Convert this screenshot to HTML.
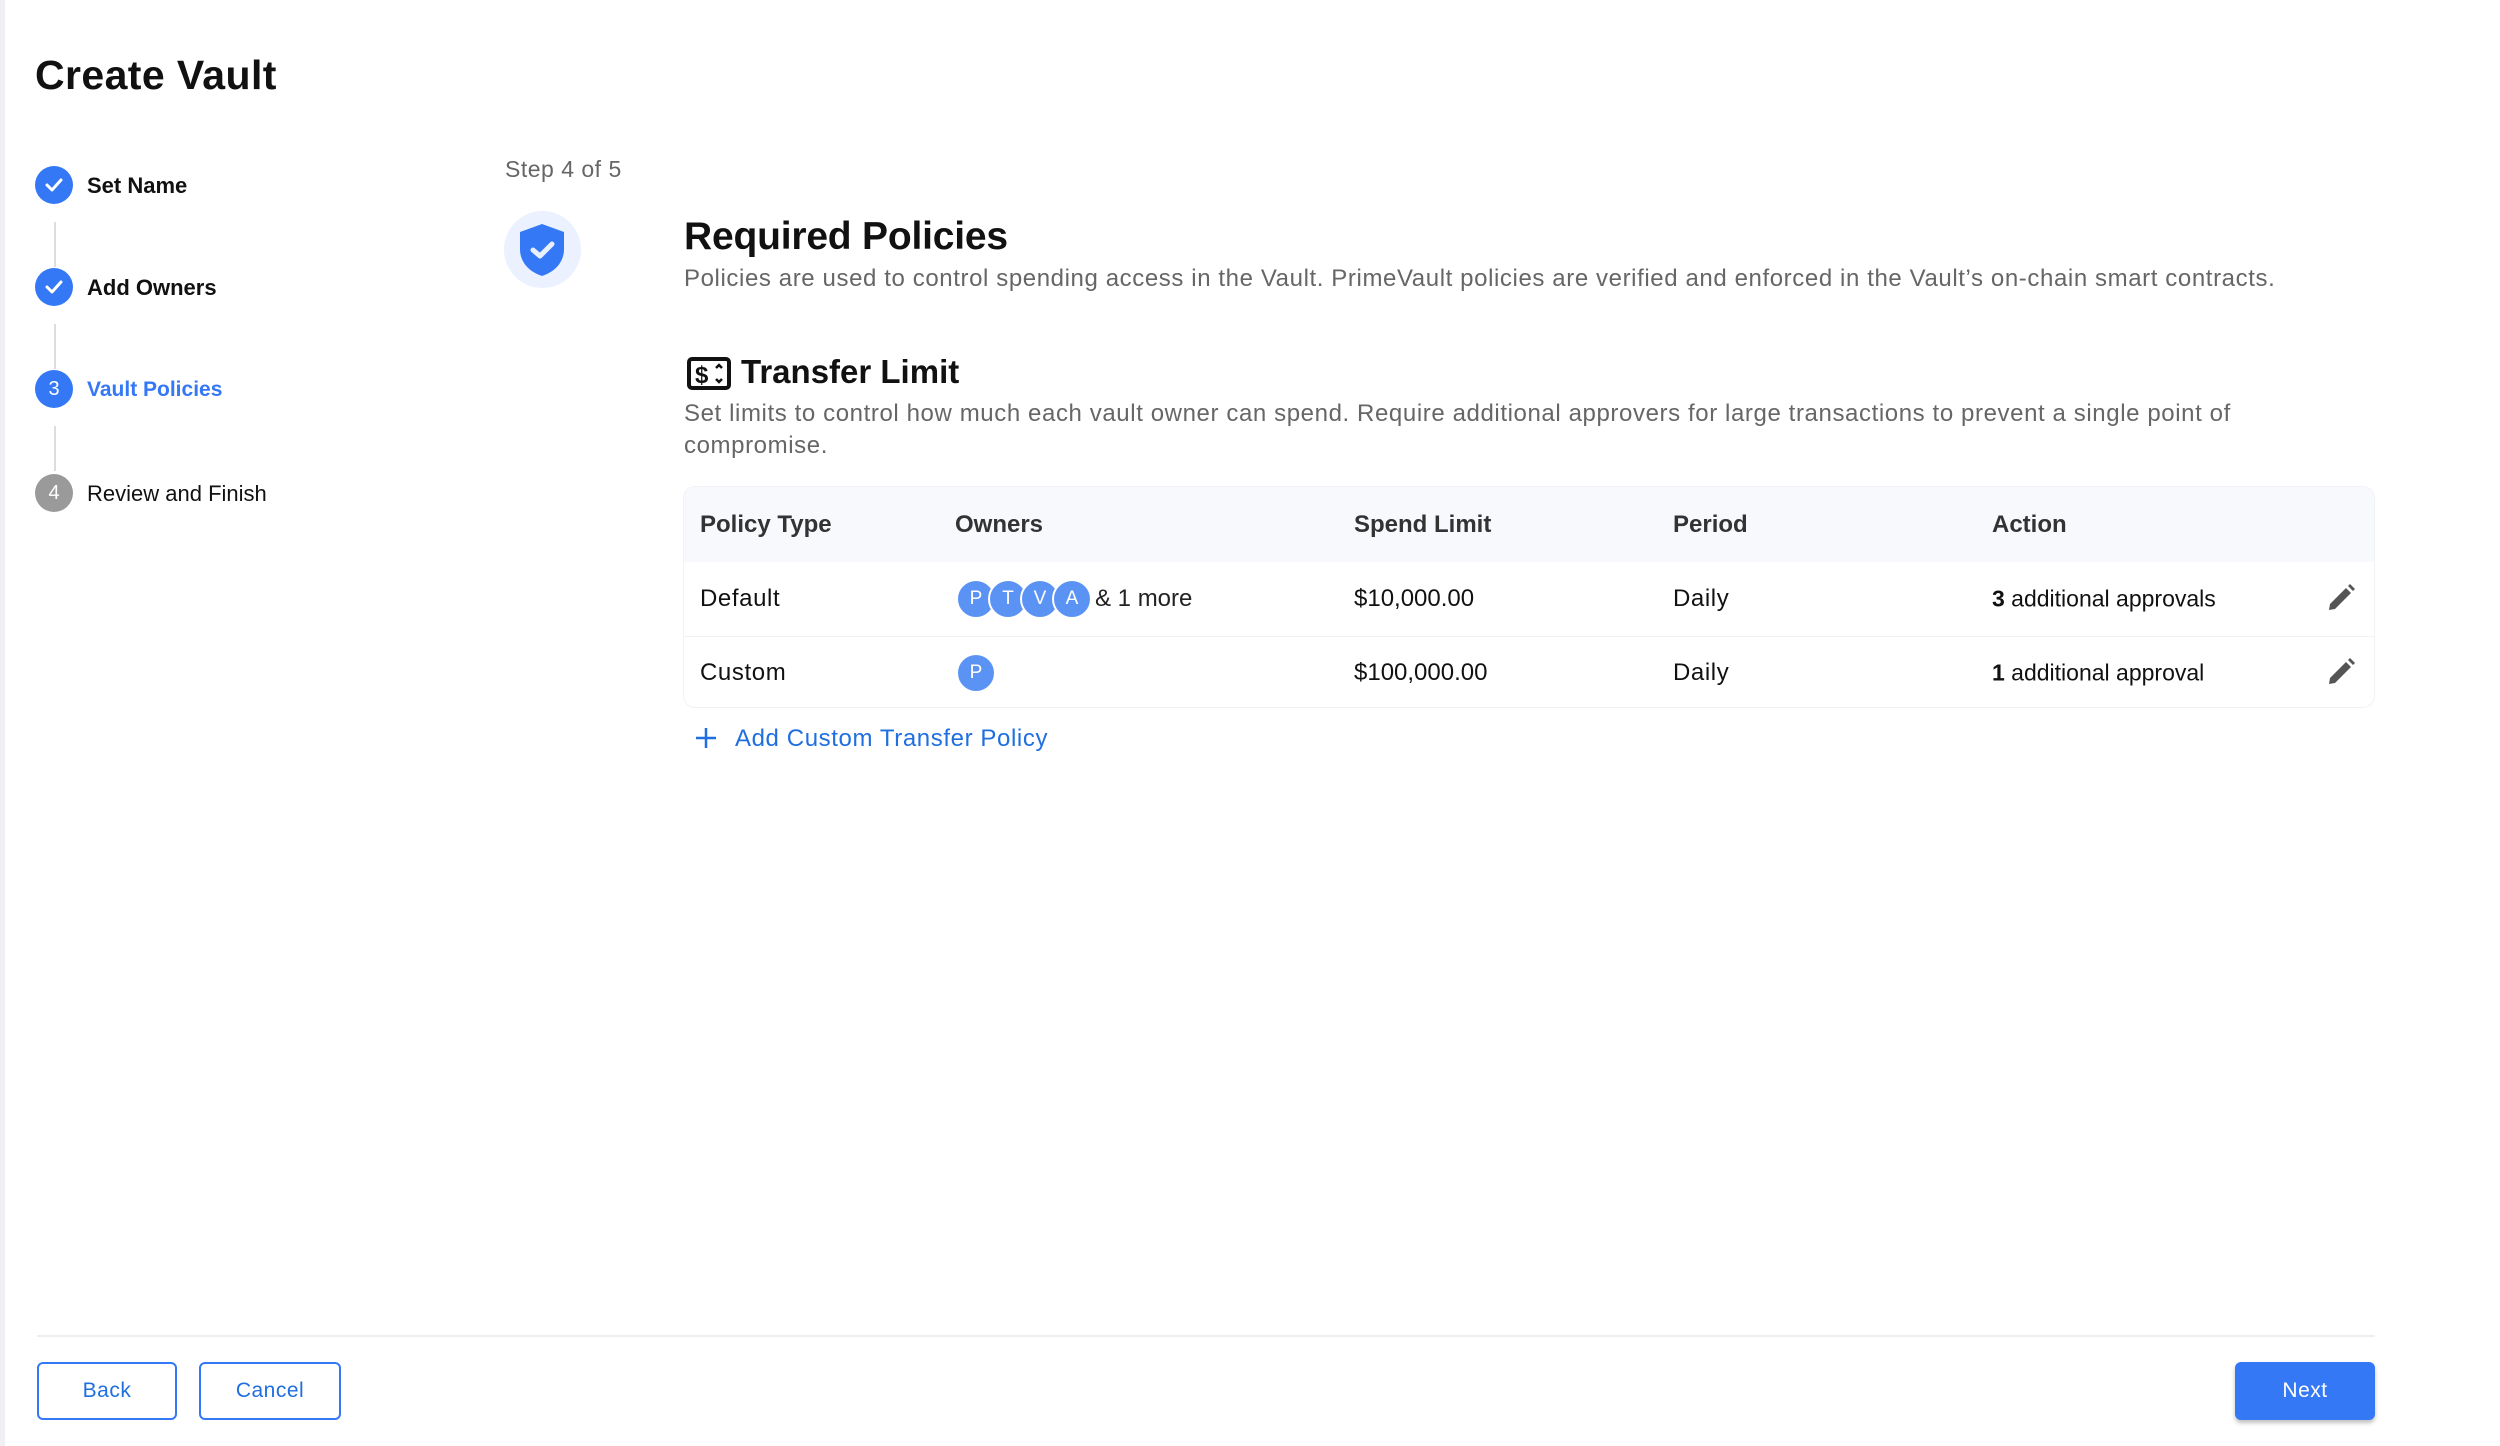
<!DOCTYPE html>
<html><head><meta charset="utf-8"><style>
*{box-sizing:border-box;margin:0;padding:0}
body{width:2500px;height:1446px;background:#fff;font-family:"Liberation Sans",sans-serif;position:relative;overflow:hidden;color:#111}
.a{position:absolute;white-space:nowrap}
.lb{position:absolute;left:0;top:0;width:5px;height:1446px;background:#eef0f3}
.circ{position:absolute;width:38px;height:38px;border-radius:50%;left:35px;color:#fff;font-size:20px;display:flex;align-items:center;justify-content:center}
.vl{position:absolute;left:54px;width:2px;background:#ddd}
.st{position:absolute;left:87px;font-size:22px;transform:translateY(-50%);letter-spacing:0}
.t{font-size:24px;letter-spacing:.6px;transform:translateY(-50%)}
.av{position:absolute;width:40px;height:40px;border-radius:50%;background:#5b93f5;border:2px solid #fff;color:#fff;font-size:19px;display:flex;align-items:center;justify-content:center;top:-20px}
.btn{position:absolute;top:1362px;height:58px;border:2px solid #3478f6;border-radius:6px;color:#1f6fe0;font-size:21px;display:flex;align-items:center;justify-content:center;letter-spacing:.5px}
</style></head><body>
<div class="lb"></div>
<div class="a" style="left:35px;top:52px;font-size:41px;font-weight:bold;letter-spacing:.4px">Create Vault</div>

<div class="vl" style="top:222px;height:45px"></div>
<div class="vl" style="top:324px;height:45px"></div>
<div class="vl" style="top:426px;height:45px"></div>
<div class="circ" style="top:166px;background:#3478f6"><svg width="22" height="22" viewBox="0 0 22 22"><path d="M4 11l5 5 9-10" fill="none" stroke="#fff" stroke-width="3" stroke-linecap="round" stroke-linejoin="round"/></svg></div>
<div class="st" style="top:186px;font-weight:bold">Set Name</div>
<div class="circ" style="top:268px;background:#3478f6"><svg width="22" height="22" viewBox="0 0 22 22"><path d="M4 11l5 5 9-10" fill="none" stroke="#fff" stroke-width="3" stroke-linecap="round" stroke-linejoin="round"/></svg></div>
<div class="st" style="top:288px;font-weight:bold">Add Owners</div>
<div class="circ" style="top:370px;background:#3478f6">3</div>
<div class="st" style="top:390px;font-weight:bold;color:#3478f6;font-size:21px">Vault Policies</div>
<div class="circ" style="top:474px;background:#9a9a9a">4</div>
<div class="st" style="top:494px">Review and Finish</div>

<div class="a" style="left:505px;top:156px;font-size:23px;color:#666;letter-spacing:.5px">Step 4 of 5</div>
<div class="a" style="left:504px;top:211px;width:77px;height:77px;border-radius:50%;background:#ebf1fe"></div>
<svg class="a" style="left:518px;top:223px" width="48" height="54" viewBox="0 0 48 54"><path d="M24 1L46 9v17c0 14-10 23-22 27C12 49 2 40 2 26V9z" fill="#3478f6"/><path d="M15 27l7 6 12-12" fill="none" stroke="#e8f0ff" stroke-width="5" stroke-linecap="round" stroke-linejoin="round"/></svg>

<div class="a" style="left:684px;top:215px;font-size:39px;font-weight:bold;letter-spacing:-.2px">Required Policies</div>
<div class="a t" style="left:684px;top:279px;color:#666">Policies are used to control spending access in the Vault. PrimeVault policies are verified and enforced in the Vault’s on-chain smart contracts.</div>

<svg class="a" style="left:687px;top:357px" width="44" height="33" viewBox="0 0 44 33"><rect x="2" y="2" width="40" height="29" rx="3" fill="none" stroke="#111" stroke-width="4"/><text x="8" y="26" font-family="Liberation Sans" font-weight="bold" font-size="24" fill="#111">$</text><path d="M29 11l3-3 3 3M29 22l3 3 3-3" fill="none" stroke="#111" stroke-width="2.5"/></svg>
<div class="a" style="left:741px;top:353px;font-size:33px;font-weight:bold">Transfer Limit</div>
<div class="a t" style="left:684px;top:414px;color:#666">Set limits to control how much each vault owner can spend. Require additional approvers for large transactions to prevent a single point of</div>
<div class="a t" style="left:684px;top:446px;color:#666">compromise.</div>

<div class="a" style="left:683px;top:486px;width:1692px;height:222px;border:1px solid #f0f2f6;border-radius:12px;overflow:hidden">
 <div style="position:absolute;left:0;top:0;width:100%;height:75px;background:#f7f9fd"></div>
 <div style="position:absolute;left:0;top:149px;width:100%;height:1px;background:#f0f2f6"></div>
</div>
<div class="a t" style="left:700px;top:525px;font-weight:bold;color:#333;letter-spacing:0">Policy Type</div>
<div class="a t" style="left:955px;top:525px;font-weight:bold;color:#333;letter-spacing:0">Owners</div>
<div class="a t" style="left:1354px;top:525px;font-weight:bold;color:#333;letter-spacing:0">Spend Limit</div>
<div class="a t" style="left:1673px;top:525px;font-weight:bold;color:#333;letter-spacing:0">Period</div>
<div class="a t" style="left:1992px;top:525px;font-weight:bold;color:#333;letter-spacing:0">Action</div>

<div class="a t" style="left:700px;top:599px">Default</div>
<div class="a" style="left:0;top:599px">
<div class="av" style="left:956px">P</div><div class="av" style="left:988px">T</div><div class="av" style="left:1020px">V</div><div class="av" style="left:1052px">A</div></div>
<div class="a t" style="left:1095px;top:599px;color:#222;letter-spacing:0">&amp; 1 more</div>
<div class="a t" style="left:1354px;top:599px;letter-spacing:0">$10,000.00</div>
<div class="a t" style="left:1673px;top:599px">Daily</div>
<div class="a t" style="left:1992px;top:599px;letter-spacing:0;font-size:23px"><b>3</b> additional approvals</div>

<div class="a t" style="left:700px;top:673px">Custom</div>
<div class="a" style="left:0;top:673px"><div class="av" style="left:956px">P</div></div>
<div class="a t" style="left:1354px;top:673px;letter-spacing:0">$100,000.00</div>
<div class="a t" style="left:1673px;top:673px">Daily</div>
<div class="a t" style="left:1992px;top:673px;letter-spacing:0;font-size:23px"><b>1</b> additional approval</div>

<svg class="a" style="left:2326px;top:583px" width="30" height="30" viewBox="0 0 30 30"><path d="M3 27l1-6L20 5l5 5L9 26z" fill="#555"/><path d="M22 3l2-2 5 5-2 2z" fill="#555"/></svg>
<svg class="a" style="left:2326px;top:657px" width="30" height="30" viewBox="0 0 30 30"><path d="M3 27l1-6L20 5l5 5L9 26z" fill="#555"/><path d="M22 3l2-2 5 5-2 2z" fill="#555"/></svg>

<svg class="a" style="left:695px;top:727px" width="22" height="22" viewBox="0 0 22 22"><path d="M11 1v20M1 11h20" stroke="#1f6fe0" stroke-width="2.5"/></svg>
<div class="a t" style="left:735px;top:739px;color:#1f6fe0">Add Custom Transfer Policy</div>

<div class="a" style="left:37px;top:1335px;width:2338px;height:2px;background:#eee"></div>
<div class="btn" style="left:37px;width:140px">Back</div>
<div class="btn" style="left:199px;width:142px">Cancel</div>
<div class="btn" style="left:2235px;width:140px;background:#3478f6;color:#fff;box-shadow:0 3px 4px rgba(0,0,0,.25)">Next</div>
</body></html>
